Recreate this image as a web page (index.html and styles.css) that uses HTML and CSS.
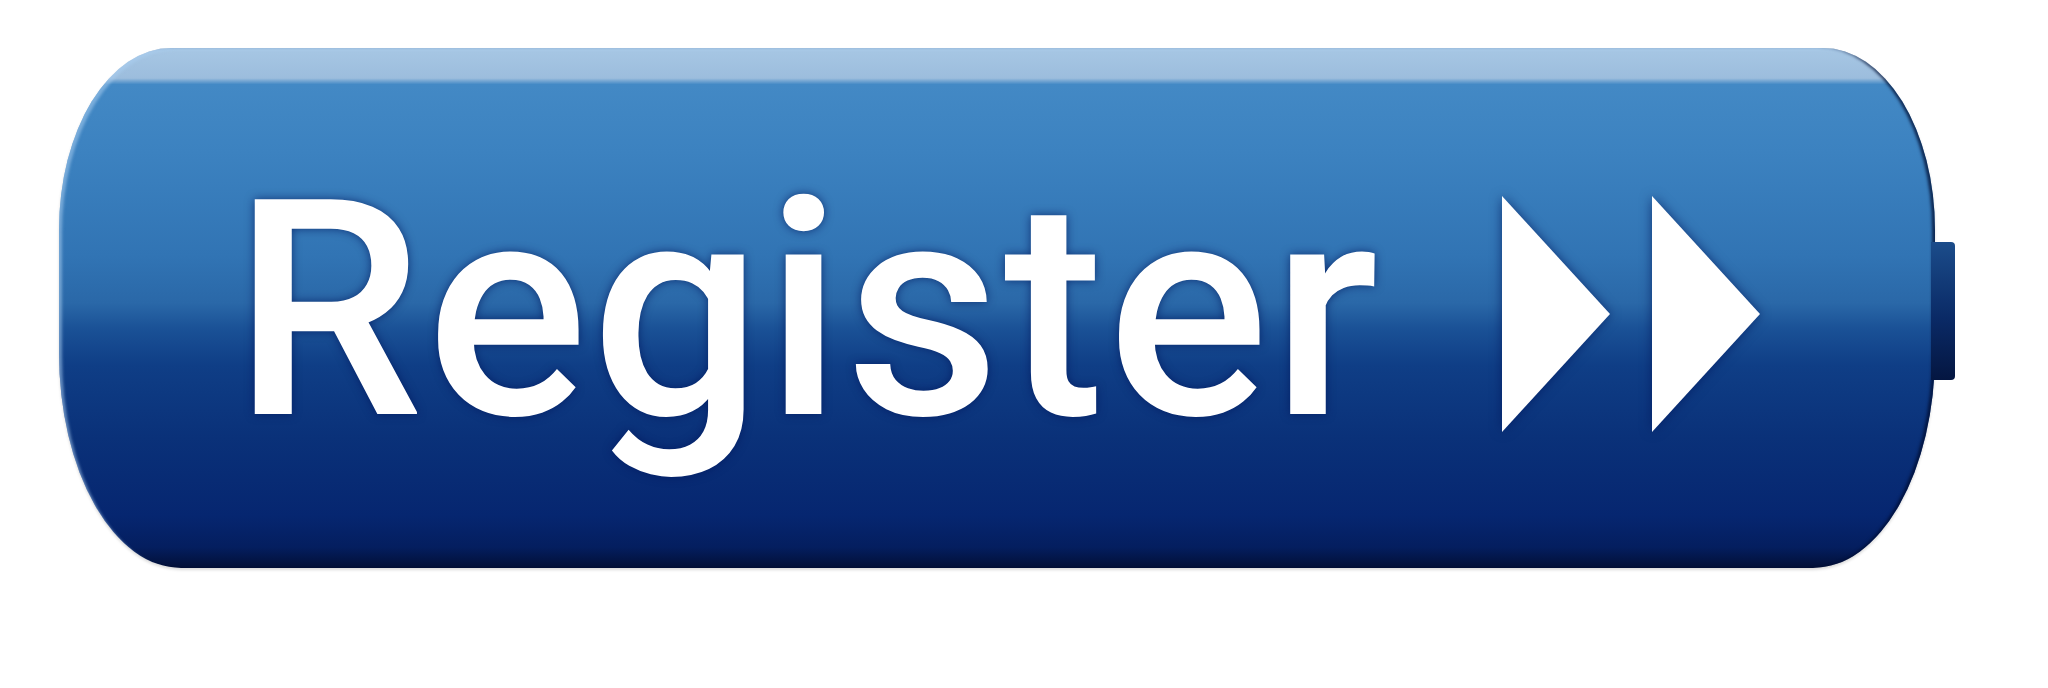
FILE: index.html
```html
<!DOCTYPE html>
<html lang="en">
<head>
<meta charset="utf-8">
<title>Register</title>
<link rel="stylesheet" href="styles.css">
</head>
<body>
<div class="page">
  <a class="register-btn" href="#">
    <span class="label">Register</span>
    <span class="arrows">
      <svg class="arrow" viewBox="0 0 108 236" width="108" height="236"><polygon points="0,0 108,118 0,236" fill="#ffffff"/></svg>
      <svg class="arrow" viewBox="0 0 108 236" width="108" height="236"><polygon points="0,0 108,118 0,236" fill="#ffffff"/></svg>
    </span>
  </a>
</div>
</body>
</html>
```

FILE: styles.css
```css
html, body {
  margin: 0;
  padding: 0;
  background: #ffffff;
}

.page {
  width: 2048px;
  height: 688px;
  padding: 48px 0 0 59px;
  box-sizing: border-box;
}

.register-btn {
  position: relative;
  display: flex;
  align-items: center;
  box-sizing: border-box;
  width: 1876px;
  height: 520px;
  padding: 0 175px 0 174px;
  border-radius: 112px 112px 122px 122px / 182px 182px 215px 215px;
  text-decoration: none;
  background: linear-gradient(to bottom,
    #a7c7e4 0%,
    #9cbddd 5.8%,
    #4389c5 7%,
    #3c82c0 20%,
    #3174b4 40%,
    #2a68a8 49%,
    #1a5196 54%,
    #0f3e86 61%,
    #0a3179 75%,
    #062670 90%,
    #041e5f 96%,
    #020f36 100%);
  box-shadow:
    inset 4px 3px 3px -1px rgba(170, 205, 240, 0.55),
    inset -4px 0 3px -1px rgba(2, 14, 50, 0.75),
    0 2px 3px rgba(0, 0, 0, 0.15);
}

.register-btn::after {
  content: "";
  position: absolute;
  right: -20px;
  top: 194px;
  width: 24px;
  height: 138px;
  border-radius: 0 4px 4px 0;
  background: linear-gradient(to bottom, #1b4c8a, #0a2a66 55%, #041641);
}

.label {
  font-family: Roboto, "Liberation Sans", sans-serif;
  font-weight: 500;
  font-size: 302px;
  line-height: 1;
  letter-spacing: 3px;
  color: #ffffff;
  text-shadow: 0 0 10px rgba(0, 22, 90, 0.7);
  margin-top: 6px;
}

.arrows {
  display: flex;
  gap: 42px;
  margin-left: auto;
  margin-top: 11px;
}

.arrow {
  display: block;
  filter: drop-shadow(0 0 6px rgba(0, 22, 90, 0.7));
}
```
